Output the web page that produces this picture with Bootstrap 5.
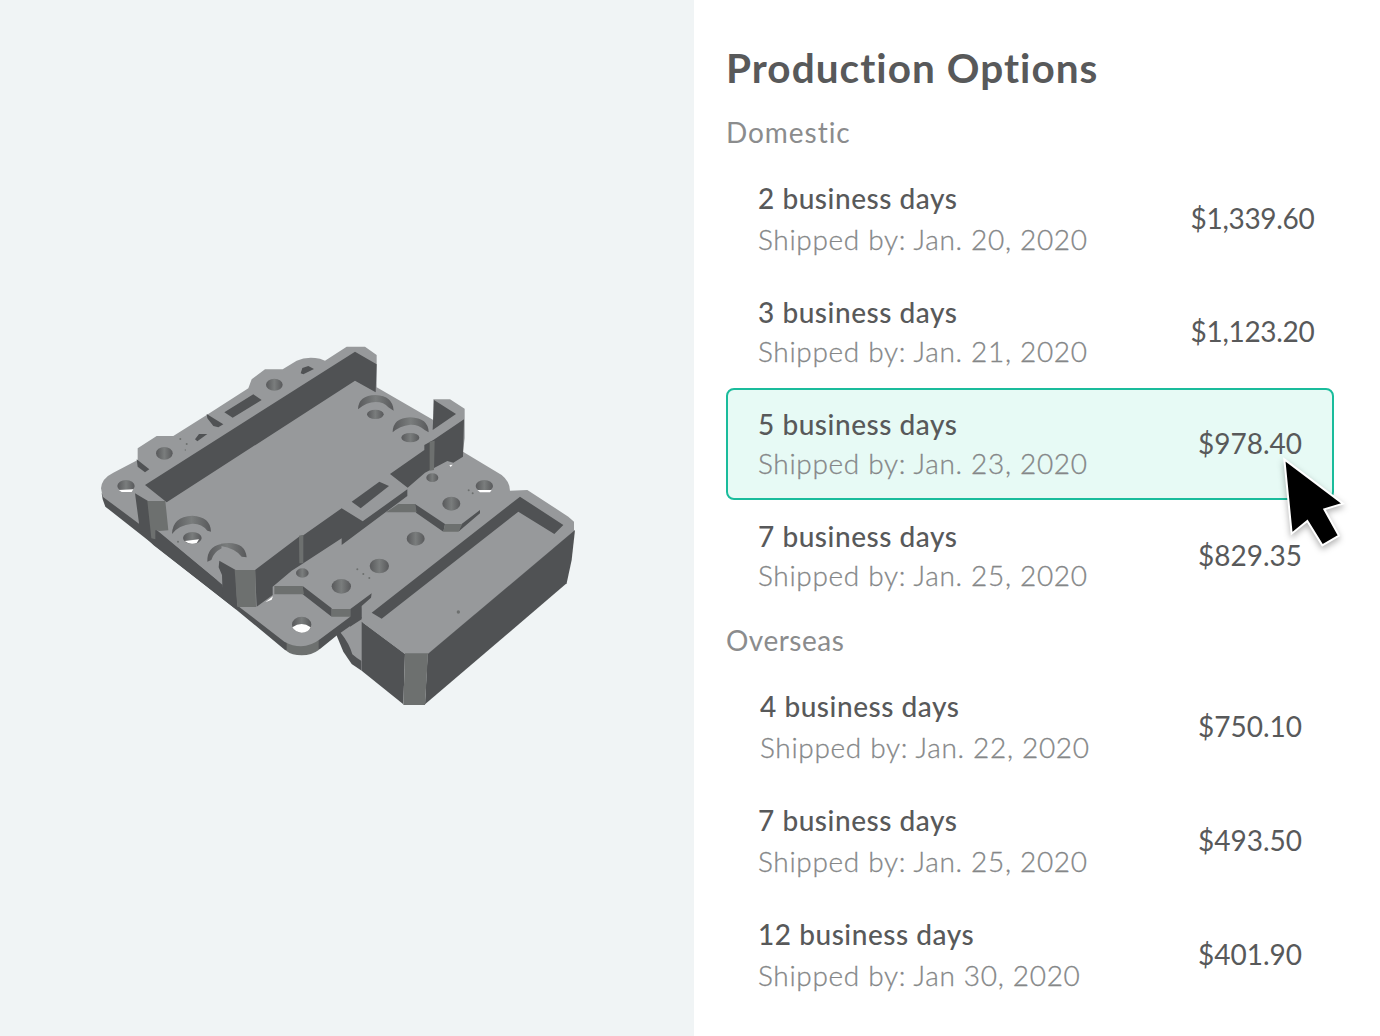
<!DOCTYPE html>
<html lang="en">
<head>
<meta charset="utf-8">
<meta name="viewport" content="width=device-width, initial-scale=1">
<title>Production Options</title>
<link href="https://cdn.jsdelivr.net/npm/bootstrap@5.3.0/dist/css/bootstrap.min.css" rel="stylesheet">
<style>
body{font-family:Lato,"Open Sans",sans-serif;color:#58595a;background:#fff;font-size:28px;font-variant-ligatures:none}
.viewer{width:694px;background:#f0f4f5;padding:330px 0 0 90px}
.viewer svg{width:500px;height:390px}
.options{width:686px;padding:40px 46px 0 32px}
.page-title{font-size:40.5px;font-weight:700;line-height:56px;height:72px;letter-spacing:1.05px}
.group-name{line-height:40px;color:#8b8c8d}
.group-domestic{height:50px;letter-spacing:.95px}
.group-overseas{height:50px;margin-top:8px;letter-spacing:.5px}
.option{height:112px;padding-left:30px;border:2px solid transparent;border-radius:8px;line-height:40px}
.option.roomy{height:114px;line-height:42px}
.option.chosen{background:#e7faf5;border-color:#1abc9c}
.days{font-weight:500;white-space:nowrap;letter-spacing:.54px}
.ship{font-weight:300;color:#858788;-webkit-text-stroke:.3px #858788;white-space:nowrap;letter-spacing:.68px;margin-top:-1px;margin-bottom:1px}
.nudged{padding-left:2px}
.price{width:164px;white-space:nowrap;padding-bottom:2px}
.price.long{padding-left:5px;letter-spacing:-.3px}
.pointer{top:60px;right:-25px;width:80px;height:104px;z-index:2;filter:drop-shadow(0 3px 3px rgba(0,0,0,.3))}
</style>
<script src="https://cdn.jsdelivr.net/npm/bootstrap@5.3.0/dist/js/bootstrap.bundle.min.js"></script>
</head>
<body>
<main class="d-flex vh-100 overflow-hidden">
<section class="viewer flex-shrink-0">
<svg class="d-block" viewBox="0 0 1500 1170" role="img" aria-label="Part preview">
<defs>
<linearGradient id="bore"><stop offset="0" stop-color="#58595b"/><stop offset=".5" stop-color="#7a7d7d"/><stop offset="1" stop-color="#58595b"/></linearGradient>
</defs>
<!-- undersides -->
<g fill="#505254">
<path d="M35 490L38 508L46 530L440 840L585 960Q635 985 690 957L742 915L815 868V800L400 740L200 590Z"/>
<path d="M738 912L760 965L785 1002L815 1022V860Z"/>
</g>
<path fill="#6d706f" d="M590 935V963Q605 976 635 976Q665 976 686 960V930Z"/>
<path fill="#97999b" d="M752 908L818 862V995Q800 985 787 973Q778 940 752 908Z"/>
<!-- top faces -->
<path fill="#97999b" d="M33 475Q35 445 70 428L143 390V355L200 318H250L350 255L475 175L485 148L525 118H578L620 92Q650 78 690 86L705 92L770 50H825L860 75V172L1030 270V208H1080L1124 236V325L1119 365L1235 435Q1260 455 1260 482L1312 480L1435 560L1452 575V605L1015 972H945L815 875V835L690 928Q640 966 583 935L440 825L380 750L200 603L148 582L38 500Z"/>
<g fill="#505254">
<path d="M165 465L795 65L860 103L857 187L795 152L230 517Z"/>
<path d="M135 490L174 513L185 600L195 630L150 602Z"/>
<path d="M200 600L398 765L400 800L440 830L438 838L190 645L150 605Z"/>
<path d="M388 692L437 720L442 832L398 798L396 735L386 712Z"/>
<path d="M495 720L630 618L640 616L755 535L818 574L952 478V498L755 645V625L640 700L605 722L548 770V795L500 830Z"/>
<path d="M900 432L1003 360V345L1030 330L1122 268L1119 380L1090 398L1072 393L1005 428L953 473Z"/>
<path d="M785 515L868 455L897 468L812 535Z"/>
<path d="M1032 210L1098 252L1028 300Z"/>
<path d="M638 768L725 835V860L638 793ZM780 838L845 790L843 803L815 828V868L780 890V860Z"/>
<path d="M975 522L1065 582L1060 605L978 548ZM1115 582L1170 540V550L1105 605Z"/>
<path d="M845 848L1290 500L1420 585L1393 612L1285 545L875 866Z"/>
<path d="M815 875L945 972L940 1123L815 1022Z"/>
<path d="M1013 972L1455 600L1445 690L1430 760L1005 1123Z"/>
<path d="M140 388L178 418L165 427L143 410ZM350 252L400 283L385 292L370 288L352 265ZM403 247L490 193L515 210L428 263ZM315 328L327 312L352 312L322 334ZM632 130L637 114L655 108L672 117L640 133Z"/>
</g>
<g fill="#6d706f">
<path d="M172 513H226L235 601L208 603L196 600V628L184 625Z"/>
<path d="M434 720H496L498 831H442Z"/>
<path d="M627 617L640 615V700H628ZM1019 335L1034 332L1032 420L1019 422Z"/>
<path d="M553 768H638L642 793H553ZM725 837H782V860H725ZM925 522H975L980 547H888ZM1065 582H1117L1105 605H1060Z"/>
<path d="M945 970H1014L1005 1125H940Z"/>
</g>
<!-- counterbore lips -->
<g fill="url(#bore)">
<path d="M804 238Q805 196 857 195Q908 197 911 242L895 232Q882 216 857 216Q830 216 804 238Z"/>
<path d="M908 307Q908 264 961 262Q1015 264 1016 307L1004 300Q985 283 961 284Q928 288 908 307Z"/>
<path d="M246 612Q247 560 307 557Q362 560 363 605L352 602Q335 580 307 581Q265 585 246 612Z"/>
<path d="M352 695Q350 652 393 642L395 655Q370 668 364 690ZM393 641Q465 630 470 682L455 680Q435 655 393 648Z"/>
</g>
<g fill="url(#bore)">
<ellipse cx="223" cy="370" rx="25" ry="19"/><ellipse cx="553" cy="164" rx="25" ry="18"/>
<ellipse cx="1084" cy="521" rx="27" ry="21"/><ellipse cx="977" cy="626" rx="27" ry="21"/>
<ellipse cx="868" cy="708" rx="29" ry="22"/><ellipse cx="754" cy="769" rx="29" ry="22"/>
<ellipse cx="637" cy="729" rx="19" ry="14"/><ellipse cx="1027" cy="443" rx="18" ry="13"/>
<ellipse cx="856" cy="253" rx="25" ry="14"/><ellipse cx="961" cy="323" rx="27" ry="14"/>
<ellipse cx="108" cy="468" rx="26" ry="18"/><ellipse cx="1183" cy="468" rx="26" ry="18"/>
<ellipse cx="307" cy="624" rx="28" ry="18"/><ellipse cx="635" cy="884" rx="29" ry="24"/>
</g>
<g fill="#fff">
<path d="M86 480L130 478L125 486H95ZM1162 480H1205L1200 487H1170ZM284 633L327 628L320 639Q298 645 284 633ZM607 892Q635 872 662 892Q655 908 635 908Q615 907 607 892ZM526 817L549 799L545 809ZM1078 405L1088 404L1082 411Z"/>
</g>
<g fill="#6d706f"><circle cx="271" cy="327" r="3"/><circle cx="290" cy="342" r="3"/><circle cx="286" cy="360" r="2"/><circle cx="802" cy="718" r="3"/><circle cx="820" cy="732" r="3"/><circle cx="838" cy="744" r="3"/><circle cx="1105" cy="846" r="5"/><circle cx="1136" cy="481" r="3"/><circle cx="1148" cy="490" r="3"/><circle cx="264" cy="635" r="3"/></g>
</svg>
</section>
<section class="options flex-shrink-0">
<h1 class="page-title m-0">Production Options</h1>
<div class="group-name group-domestic">Domestic</div>
<div class="option roomy d-flex align-items-center justify-content-between"><div><div class="days">2 business days</div><div class="ship">Shipped by: Jan. 20, 2020</div></div><div class="price long text-center">$1,339.60</div></div>
<div class="option d-flex align-items-center justify-content-between"><div><div class="days">3 business days</div><div class="ship">Shipped by: Jan. 21, 2020</div></div><div class="price long text-center">$1,123.20</div></div>
<div class="option chosen position-relative d-flex align-items-center justify-content-between"><div><div class="days">5 business days</div><div class="ship">Shipped by: Jan. 23, 2020</div></div><div class="price text-center">$978.40</div>
<svg class="pointer position-absolute" viewBox="285 240 240 312" aria-hidden="true"><path d="M307 268L483 401L427 418L471 497L421 526L376 453L329 491Z" fill="#000" stroke="#fff" stroke-width="6"/></svg></div>
<div class="option d-flex align-items-center justify-content-between"><div><div class="days">7 business days</div><div class="ship">Shipped by: Jan. 25, 2020</div></div><div class="price text-center">$829.35</div></div>
<div class="group-name group-overseas">Overseas</div>
<div class="option roomy d-flex align-items-center justify-content-between"><div class="nudged"><div class="days">4 business days</div><div class="ship">Shipped by: Jan. 22, 2020</div></div><div class="price text-center">$750.10</div></div>
<div class="option roomy d-flex align-items-center justify-content-between"><div><div class="days">7 business days</div><div class="ship">Shipped by: Jan. 25, 2020</div></div><div class="price text-center">$493.50</div></div>
<div class="option roomy d-flex align-items-center justify-content-between"><div><div class="days">12 business days</div><div class="ship">Shipped by: Jan 30, 2020</div></div><div class="price text-center">$401.90</div></div>
</section>
</main>
</body>
</html>
